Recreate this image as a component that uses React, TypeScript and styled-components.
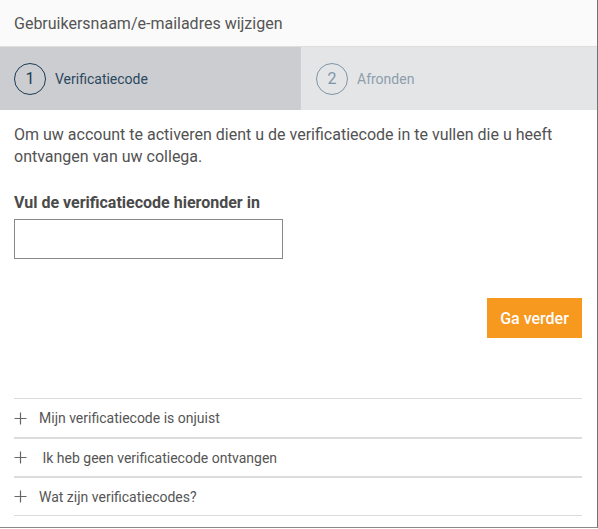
import React, { useState } from "react";
import styled, { createGlobalStyle } from "styled-components";

const GlobalStyle = createGlobalStyle`
  html, body {
    margin: 0;
    padding: 0;
    background: #ffffff;
  }
  body {
    font-family: Roboto, "Liberation Sans", Arial, sans-serif;
  }
`;

const Card = styled.div`
  width: 598px;
  height: 528px;
  box-sizing: border-box;
  border-right: 1px solid #6f7378;
  border-bottom: 1px solid #8a8a8a;
  background: #ffffff;
  display: flex;
  flex-direction: column;
`;

const Header = styled.div`
  height: 46px;
  display: flex;
  align-items: center;
  padding: 0 14px;
  background: #fafafa;
  border-bottom: 1px solid #dedede;
  color: #555;
  font-size: 16px;
`;

const Steps = styled.div`
  display: grid;
  grid-template-columns: 300px 1fr;
  height: 63px;
`;

const Step = styled.div<{ $active?: boolean }>`
  display: flex;
  align-items: center;
  gap: 9px;
  padding-left: ${({ $active }) => ($active ? "14px" : "15px")};
  background: ${({ $active }) => ($active ? "#cbcdd0" : "#e4e5e7")};
  border-left: ${({ $active }) => ($active ? "none" : "1px solid #cfd0d2")};
  color: ${({ $active }) => ($active ? "#2c4861" : "#8d9eac")};
  font-size: 14px;
`;

const StepNumber = styled.span<{ $active?: boolean }>`
  width: 30px;
  height: 30px;
  border-radius: 50%;
  border: 1px solid ${({ $active }) => ($active ? "#1d3b55" : "#7f95a6")};
  display: flex;
  align-items: center;
  justify-content: center;
  font-size: 16px;
  color: ${({ $active }) => ($active ? "#1d3b55" : "#7f95a6")};
`;

const Body = styled.div`
  padding: 14px 15px 0 14px;
  display: flex;
  flex-direction: column;
`;

const Intro = styled.p`
  margin: 0;
  font-size: 16px;
  line-height: 22px;
  color: #525252;
`;

const Label = styled.label`
  margin-top: 24px;
  font-size: 16px;
  line-height: 22px;
  font-weight: 700;
  color: #4a4a4a;
`;

const CodeInput = styled.input`
  margin-top: 5px;
  width: 269px;
  height: 40px;
  box-sizing: border-box;
  border: 1px solid #888;
  padding: 0 10px;
  font-size: 16px;
  font-family: inherit;
  outline: none;
`;

const Actions = styled.div`
  margin-top: 39px;
  display: flex;
  justify-content: flex-end;
`;

const NextButton = styled.button`
  width: 95px;
  height: 40px;
  border: none;
  background: #f7981f;
  color: #ffffff;
  font-family: inherit;
  font-size: 16px;
  font-weight: 500;
  cursor: pointer;
`;

const Faq = styled.div`
  margin-top: 60px;
  display: flex;
  flex-direction: column;
`;

const FaqItem = styled.div`
  height: 37px;
  display: flex;
  align-items: center;
  gap: 12px;
  border-top: 1px solid #dcdcdc;
  border-bottom: 1px solid #dcdcdc;
  color: #555;
  font-size: 14px;
  cursor: pointer;

  &:first-child {
    height: 38px;
  }
`;

const Plus = styled.svg`
  width: 13px;
  height: 13px;
  flex-shrink: 0;
`;

const faqs = [
  "Mijn verificatiecode is onjuist",
  "\u00a0Ik heb geen verificatiecode ontvangen",
  "Wat zijn verificatiecodes?",
];

export default function App() {
  const [code, setCode] = useState("");

  return (
    <>
      <GlobalStyle />
      <Card>
        <Header>Gebruikersnaam/e-mailadres wijzigen</Header>
        <Steps>
          <Step $active>
            <StepNumber $active>1</StepNumber>
            Verificatiecode
          </Step>
          <Step>
            <StepNumber>2</StepNumber>
            Afronden
          </Step>
        </Steps>
        <Body>
          <Intro>
            Om uw account te activeren dient u de verificatiecode in te vullen die u heeft
            ontvangen van uw collega.
          </Intro>
          <Label htmlFor="code">Vul de verificatiecode hieronder in</Label>
          <CodeInput id="code" value={code} onChange={(e) => setCode(e.target.value)} />
          <Actions>
            <NextButton>Ga verder</NextButton>
          </Actions>
          <Faq>
            {faqs.map((q) => (
              <FaqItem key={q}>
                <Plus viewBox="0 0 13 13">
                  <path d="M6.5 0.5V12.5M0.5 6.5H12.5" stroke="#666" strokeWidth="1.2" fill="none" />
                </Plus>
                {q}
              </FaqItem>
            ))}
          </Faq>
        </Body>
      </Card>
    </>
  );
}
